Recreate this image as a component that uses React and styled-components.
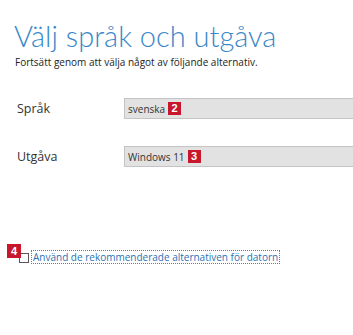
import React from "react";
import styled, { createGlobalStyle } from "styled-components";

const Global = createGlobalStyle`
  html, body { margin: 0; padding: 0; background: #fff; }
  body { font-family: "Open Sans", "Liberation Sans", sans-serif; overflow: hidden; }
`;

const Page = styled.div`
  width: 353px;
  height: 335px;
  padding: 17px 0 0 14px;
  box-sizing: border-box;
  overflow: hidden;
`;

const Title = styled.h1`
  margin: 0;
  font-family: Lato, "Open Sans", sans-serif;
  font-weight: 300;
  font-size: 29px;
  line-height: 38px;
  color: #3a87c8;
`;

const Sub = styled.p`
  margin: 0 0 0 1px;
  font-size: 10px;
  line-height: 14px;
  color: #222;
`;

const Form = styled.div`
  display: flex;
  flex-direction: column;
  gap: 27px;
  margin-top: 29px;
`;

const Row = styled.div`
  display: grid;
  grid-template-columns: 110px 1fr;
  align-items: center;
`;

const Label = styled.span`
  font-size: 12.5px;
  color: #333;
  padding-left: 3px;
`;

const Field = styled.div`
  height: 21px;
  margin-right: -20px;
  background: #e2e2e2;
  border: 1px solid #c4c4c4;
  box-sizing: border-box;
  display: flex;
  align-items: center;
  padding-left: 3px;
  gap: 3px;
  font-size: 10px;
  color: #333;
`;

const Badge = styled.span`
  display: inline-flex;
  align-items: center;
  justify-content: center;
  width: 13px;
  height: 13px;
  background: #c8162c;
  color: #fff;
  font-family: "Liberation Sans", sans-serif;
  font-weight: 700;
  font-size: 11px;
  line-height: 1;
`;

const Check = styled.div`
  display: flex;
  align-items: flex-end;
  margin: 77px 0 0 -7px;
`;

const BoxWrap = styled.span`
  position: relative;
  width: 22px;
  height: 20px;
`;

const Tick = styled.span`
  position: absolute;
  left: 12px;
  top: 9px;
  width: 10px;
  height: 10px;
  border: 1px solid #555;
  box-sizing: border-box;
  background: #fff;
`;

const Corner = styled(Badge)`
  position: absolute;
  left: 0;
  top: 0;
  width: 14px;
  height: 14px;
  z-index: 1;
`;

const Link = styled.span`
  font-size: 10px;
  color: #2a72b5;
  border: 1px dotted #777;
  padding: 0 1px;
  line-height: 12px;
  margin-left: 2px;
`;

export default function App() {
  return (
    <>
      <Global />
      <Page>
        <Title>Välj språk och utgåva</Title>
        <Sub>Fortsätt genom att välja något av följande alternativ.</Sub>
        <Form>
          <Row>
            <Label>Språk</Label>
            <Field>svenska <Badge>2</Badge></Field>
          </Row>
          <Row>
            <Label>Utgåva</Label>
            <Field>Windows 11 <Badge>3</Badge></Field>
          </Row>
        </Form>
        <Check>
          <BoxWrap>
            <Corner>4</Corner>
            <Tick />
          </BoxWrap>
          <Link>Använd de rekommenderade alternativen för datorn</Link>
        </Check>
      </Page>
    </>
  );
}
